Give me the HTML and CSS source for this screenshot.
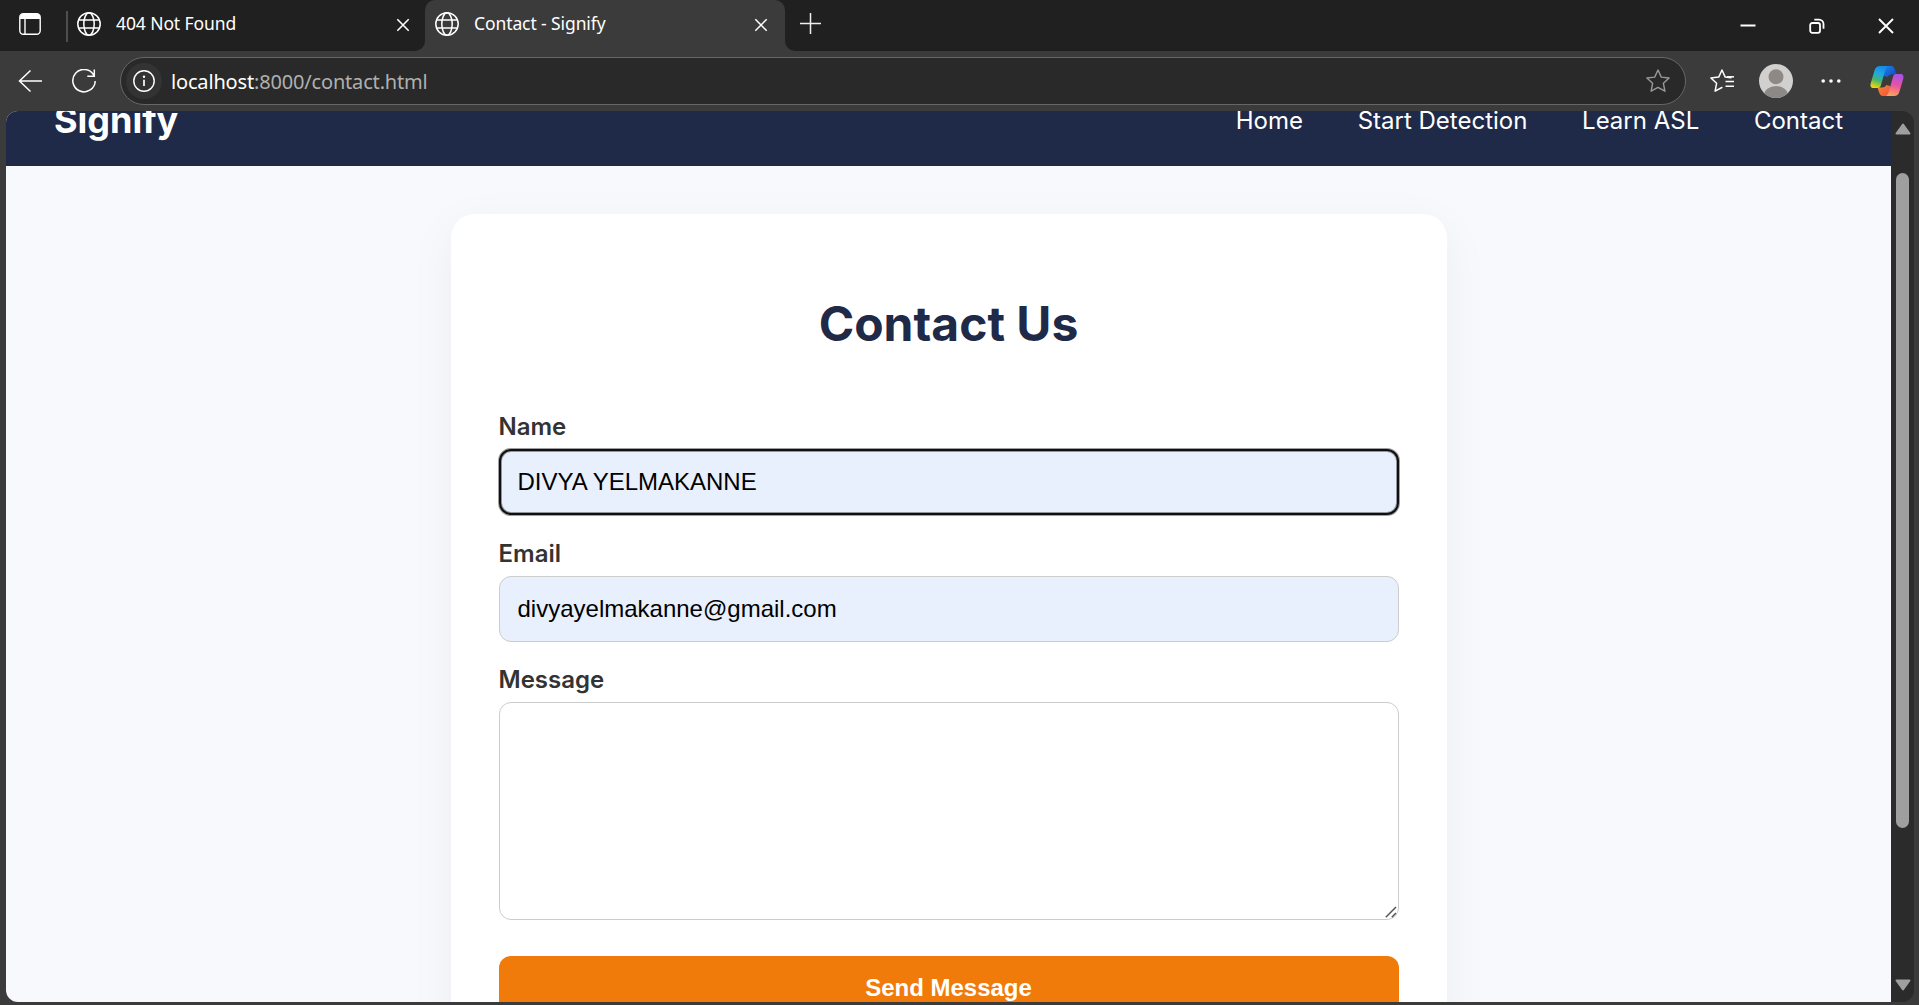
FILE: index.html
```html
<!DOCTYPE html>
<html lang="en">
<head>
<meta charset="utf-8">
<title>Contact - Signify</title>
<link rel="stylesheet" href="styles.css">
</head>
<body>
<svg class="defs" aria-hidden="true">
  <symbol id="globe" viewBox="0 0 24 24"><g fill="none" stroke="#fff" stroke-width="1.5"><circle cx="12" cy="12" r="11.2"/><ellipse cx="12" cy="12" rx="5.2" ry="11.2"/><path d="M1.7 8h20.6M1.7 16h20.6"/></g></symbol>
  <symbol id="cross" viewBox="0 0 16 16"><path d="M1.5 1.5l13 13M14.5 1.5l-13 13" fill="none" stroke="#fff" stroke-width="1.8"/></symbol>
</svg>
<div class="window">
  <div class="tabstrip">
    <div class="strip-left">
      <svg class="tab-actions" viewBox="0 0 22 22"><rect x=".8" y=".8" width="20.4" height="20.4" rx="3.5" fill="none" stroke="#fff" stroke-width="1.4"/><path d="M1 6V4a3 3 0 0 1 3-3h14a3 3 0 0 1 3 3v2z" fill="#fff"/><path d="M6 6v15" stroke="#fff" stroke-width="1.4"/></svg>
      <span class="divider"></span>
      <div class="tab">
        <svg class="globe"><use href="#globe"/></svg>
        <span class="tab-title">404 Not Found</span>
        <svg class="tab-close"><use href="#cross"/></svg>
      </div>
    </div>
    <div class="active-slot">
      <div class="tab tab-active">
        <svg class="globe"><use href="#globe"/></svg>
        <span class="tab-title">Contact - Signify</span>
        <svg class="tab-close"><use href="#cross"/></svg>
      </div>
    </div>
    <div class="strip-right">
      <svg class="new-tab" viewBox="0 0 21 21"><path d="M10.5 0v21M0 10.5h21" stroke="#eee" stroke-width="1.5"/></svg>
      <div class="window-buttons">
        <svg class="wbtn" viewBox="0 0 16 16"><path d="M.5 7.500h15" stroke="#fff" stroke-width="2"/></svg>
        <svg class="wbtn" viewBox="0 0 16 16"><g fill="none" stroke="#fff" stroke-width="1.8"><rect x="1.2" y="5" width="9.8" height="9.8" rx="2"/><path d="M5.3 1.6H10a4.5 4.5 0 0 1 4.5 4.5v4.6"/></g></svg>
        <svg class="wbtn" viewBox="0 0 16 16"><path d="M1 1l14 14M15 1L1 15" stroke="#fff" stroke-width="1.9"/></svg>
      </div>
    </div>
  </div>

  <div class="toolbar">
    <svg class="tool back" viewBox="0 0 24 24"><path d="M12.5 1.5L1.5 12l11 10.5M1.5 12H24" fill="none" stroke="#fff" stroke-width="1.5"/></svg>
    <svg class="tool reload" viewBox="0 0 24 24"><path d="M21.8 6.2A11.2 11.2 0 1 0 23.2 12M22.3 .5v6.8h-7" fill="none" stroke="#fff" stroke-width="1.5"/></svg>
    <div class="address">
      <span class="site-info"><svg class="info" viewBox="0 0 22 22"><circle cx="11" cy="11" r="10.2" fill="none" stroke="#fff" stroke-width="1.4"/><path d="M11 9.8V16" stroke="#fff" stroke-width="1.7"/><circle cx="11" cy="6.8" r="1.2" fill="#fff"/></svg></span>
      <span class="url"><span class="host">localhost</span>:8000/contact.html</span>
      <svg class="tool star" viewBox="0 0 24 24"><path d="M12 1l3.3 7.1 7.8.9-5.7 5.3 1.5 7.9L12 18.4l-6.9 3.8 1.5-7.9L.9 9l7.8-.9z" fill="none" stroke="#999" stroke-width="1.4" stroke-linejoin="round"/></svg>
    </div>
    <svg class="tool favorites" viewBox="0 0 24 24"><path d="M21 8.7l-5.8-.6L12 1 8.7 8.1.9 9l5.7 5.3-1.5 7.9 6.800-3.700" fill="none" stroke="#fff" stroke-width="1.5" stroke-linejoin="round" stroke-linecap="round"/><path d="M15.5 12.4H24M15.5 17.3H24" stroke="#fff" stroke-width="1.5"/><path d="M17 7.8h7" stroke="#fff" stroke-width="1.5"/></svg>
    <svg class="avatar" viewBox="0 0 34 34"><clipPath id="face"><circle cx="17" cy="17" r="17"/></clipPath><g clip-path="url(#face)"><path fill="#d2d0ce" d="M0 0h34v34H0z"/><circle cx="17" cy="12.7" r="7.5" fill="#8d8986"/><ellipse cx="17" cy="31.5" rx="12" ry="9.5" fill="#8d8986"/></g></svg>
    <svg class="more" viewBox="0 0 20 20"><g fill="#fff"><circle cx="2.2" cy="10" r="1.8"/><circle cx="10" cy="10" r="1.8"/><circle cx="17.8" cy="10" r="1.8"/></g></svg>
    <svg class="copilot" viewBox="0 0 34 32">
      <defs>
        <linearGradient id="cp1" x1=".6" y1="0" x2=".3" y2="1"><stop offset="0" stop-color="#168be8"/><stop offset=".35" stop-color="#20a7e0"/><stop offset=".65" stop-color="#43b574"/><stop offset="1" stop-color="#f4d407"/></linearGradient>
        <linearGradient id="cp2" x1=".4" y1="1" x2=".6" y2="0"><stop offset="0" stop-color="#a950ec"/><stop offset=".5" stop-color="#e8539f"/><stop offset="1" stop-color="#ffa35a"/></linearGradient>
        <linearGradient id="cp3" x1="0" y1="0" x2="1" y2="1"><stop offset="0" stop-color="#1687ea"/><stop offset="1" stop-color="#1b3fc0"/></linearGradient>
        <linearGradient id="cp4" x1="1" y1="1" x2="0" y2="0"><stop offset="0" stop-color="#f28a2c"/><stop offset="1" stop-color="#f4503f"/></linearGradient>
      </defs>
      <path fill="url(#cp3)" d="M14 1h7c2.500 0 3.400 2 4.200 4.500L26.500 9.500H22c-2 0-3.500.8-4.300 2.500L14 11z"/>
      <path fill="url(#cp4)" transform="rotate(180 17 16)" d="M14 1h7c2.500 0 3.400 2 4.200 4.500L26.500 9.500H22c-2 0-3.500.8-4.300 2.500L14 11z"/>
      <path fill="url(#cp1)" d="M10 1h9c-2 0-3 2-4 5l-4 14c-.7 2.300-1.500 3-3 3H3.500C.8 23 0 21 .8 18L4.500 5.500C5.400 2.500 7 1 10 1z"/>
      <path fill="url(#cp2)" transform="rotate(180 17 16)" d="M10 1h9c-2 0-3 2-4 5l-4 14c-.7 2.300-1.500 3-3 3H3.500C.8 23 0 21 .8 18L4.500 5.500C5.400 2.500 7 1 10 1z"/>
    </svg>
  </div>

  <div class="view">
    <div class="page">
      <header class="site-header">
        <div class="logo">Signify</div>
        <nav class="nav"><a>Home</a><a>Start Detection</a><a>Learn ASL</a><a>Contact</a></nav>
      </header>
      <main class="card">
        <h2 class="title">Contact Us</h2>
        <form class="form">
          <label class="label" for="name">Name</label>
          <input class="field field-focused" id="name" type="text" value="DIVYA YELMAKANNE">
          <label class="label" for="email">Email</label>
          <input class="field" id="email" type="email" value="divyayelmakanne@gmail.com">
          <label class="label" for="message">Message</label>
          <div class="message-wrap">
            <textarea class="message" id="message"></textarea>
            <svg class="grip" viewBox="0 0 12 12"><path d="M.8 11.200L11 1M6.800 11.200L11 7" stroke="#555" stroke-width="1.500"/></svg>
          </div>
          <button class="send" type="button">Send Message</button>
        </form>
      </main>
    </div>
    <div class="scrollbar">
      <svg class="arrow" viewBox="0 0 16 12"><path d="M8 1.500L14.500 10.500H1.500z" fill="#9f9f9f" stroke="#9f9f9f" stroke-width="2" stroke-linejoin="round"/></svg>
      <span class="thumb"></span>
      <svg class="arrow" viewBox="0 0 16 12"><path d="M8 10.500L14.500 1.500H1.500z" fill="#9f9f9f" stroke="#9f9f9f" stroke-width="2" stroke-linejoin="round"/></svg>
    </div>
  </div>
</div>
</body>
</html>
```
FILE: styles.css
```css
* { box-sizing: border-box; }
body { margin: 0; background: #3b3b3b; overflow: hidden; }
svg { display: block; flex: none; }
.defs { display: none; }
.window { width: 1919px; height: 1005px; display: flex; flex-direction: column; background: #3b3b3b; font-family: "Noto Sans", sans-serif; color: #fff; overflow: hidden; }

/* tab strip */
.tabstrip { display: flex; height: 51px; flex: none; }
.strip-left { width: 425px; display: flex; align-items: center; background: #202020; border-bottom-right-radius: 10px; padding-left: 19px; }
.tab-actions { width: 22px; height: 22px; margin-top: -3px; }
.divider { width: 2px; height: 31px; margin: 2px 0 0 25px; background: #4e4e4e; }
.tab { display: flex; align-items: center; flex: 1; height: 51px; padding: 0 15px 0 9px; }
.active-slot { width: 360px; display: flex; background: linear-gradient(#202020 26px, #3b3b3b 26px); }
.tab-active { background: #3b3b3b; border-radius: 10px 10px 0 0; padding: 0 17px 0 10px; }
.globe { width: 24px; height: 24px; margin-top: -3px; }
.tab-title { flex: 1; margin: -5px 0 0 15px; font-size: 17.500px; line-height: 24px; letter-spacing: -0.1px; white-space: nowrap; }
.tab-close { width: 14px; height: 14px; margin-top: -1px; }
.strip-right { flex: 1; display: flex; align-items: center; justify-content: space-between; background: #202020; border-bottom-left-radius: 10px; padding: 0 25px 0 15px; }
.new-tab { width: 21px; height: 21px; margin-top: -4px; }
.window-buttons { display: flex; gap: 53px; }
.wbtn { width: 16px; height: 16px; }

/* toolbar */
.toolbar { display: flex; align-items: center; height: 60px; flex: none; padding: 0 15px 0 18px; }
.tool { width: 24px; height: 24px; }
.reload { margin-left: 30px; }
.address { display: flex; align-items: center; width: 1566px; height: 48px; margin-left: 24px; padding: 0 15px 0 5px; background: #292929; border: 1px solid #666; border-radius: 24px; }
.site-info { width: 36px; height: 36px; border-radius: 50%; background: #333; display: flex; align-items: center; justify-content: center; }
.info { width: 22px; height: 22px; }
.url { flex: 1; margin: 1px 0 0 9px; font-size: 20px; line-height: 28px; letter-spacing: -0.17px; color: #b0b0b0; white-space: nowrap; }
.host { color: #fff; }
.favorites { margin-left: 24px; }
.avatar { width: 34px; height: 34px; margin-left: 25px; }
.more { width: 20px; height: 20px; margin-left: 28px; }
.copilot { width: 34px; height: 32px; margin-left: 29px; }

/* page viewport */
.view { display: flex; height: 891px; margin: 0 5px 0 6px; border-radius: 12px; overflow: hidden; flex: none; }
.page { flex: 1; display: flex; flex-direction: column; align-items: center; background: #f8f9fd; font-family: Inter, sans-serif; overflow: hidden; }
.site-header { align-self: stretch; display: flex; justify-content: space-between; align-items: center; flex: none; height: 92px; margin-top: -37px; padding: 0 48px; background: #1f2a48; }
.logo { font-size: 36px; font-weight: 700; line-height: 44px; }
.nav { display: flex; gap: 54.700px; font-size: 24px; line-height: 29px; }

/* contact card */
.card { width: 996px; height: 900px; flex: none; margin-top: 48px; padding: 48px; background: #fff; border-radius: 24px; box-shadow: 0 12px 48px rgba(0, 0, 0, .05); }
.title { margin: 32px 0 58px; font-size: 48px; font-weight: 700; line-height: 60px; text-align: center; color: #1f2a48; }
.form { display: flex; flex-direction: column; }
.label { font-size: 24px; font-weight: 600; line-height: 30px; margin-bottom: 7px; color: #333; }
.field { width: 900px; height: 66px; margin: 0 0 23px; padding: 0 18px; border: 1px solid #ccc; border-radius: 12px; background: #e8effd; color: #000; font: 24px "Liberation Sans", Arial, sans-serif; }
.field-focused { margin-bottom: 24px; outline: 2px solid #101010; outline-offset: -2px; box-shadow: 0 0 0 1px rgba(16, 16, 16, .4), inset 0 0 0 2px rgba(16, 16, 16, .4); }
.message-wrap { position: relative; height: 218px; }
.message { display: block; width: 900px; height: 218px; border: 1px solid #ccc; border-radius: 12px; resize: none; outline: none; background: #fff; }
.grip { position: absolute; right: 2px; bottom: 2px; width: 12px; height: 12px; }
.send { height: 66px; margin-top: 36px; padding: 0 0 2px; border: 0; border-radius: 12px; background: #f07a0a; color: #fff; font: 700 24px "Liberation Sans", Arial, sans-serif; }

/* scrollbar */
.scrollbar { width: 23px; display: flex; flex-direction: column; align-items: center; background: #2b2b2b; padding: 12px 0 11px; }
.arrow { width: 16px; height: 12px; }
.thumb { width: 13px; height: 655px; margin: 38px 0 auto; border-radius: 7px; background: #9f9f9f; }
```
